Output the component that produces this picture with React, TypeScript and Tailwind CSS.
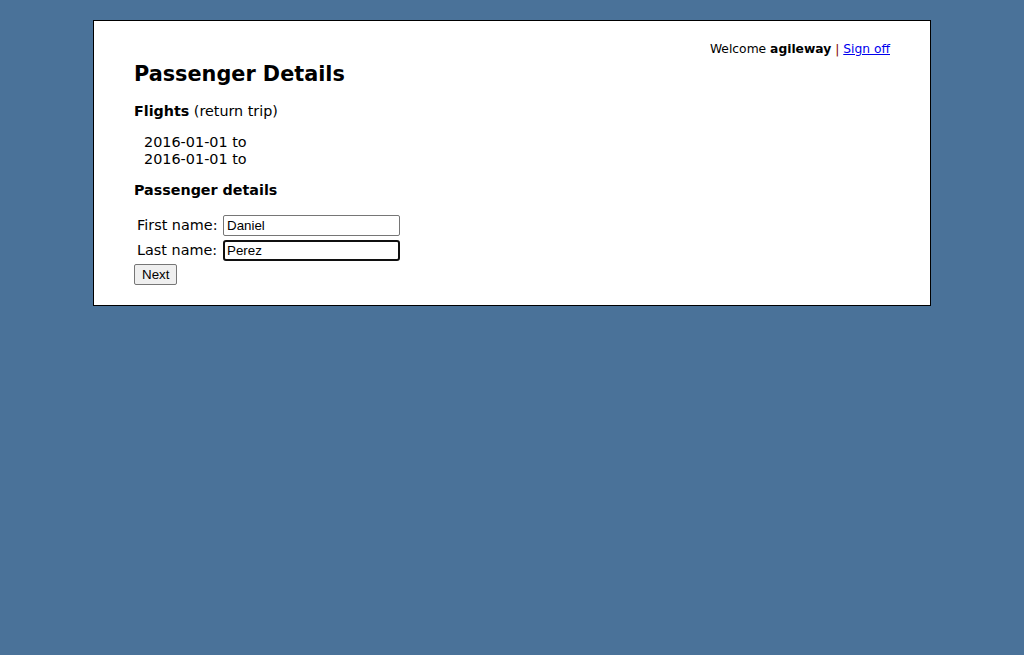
export default function App() {
  return (
    <div className="min-h-[655px] bg-[#4a7299] pt-[20px] font-['DejaVu_Sans',sans-serif] text-black">
      <div className="mx-auto w-[838px] h-[286px] border border-black bg-white px-[40px] pt-[20px]">
        <div className="flex justify-end text-[12.3px] leading-[16px]">
          <span>
            Welcome <b>agileway</b> <span className="text-[#800000]">|</span>{" "}
            <a href="#" className="text-[#0000ee] underline">Sign off</a>
          </span>
        </div>
        <h1 className="mt-[4px] text-[20.8px] font-bold leading-[26px]">Passenger Details</h1>
        <div className="mt-[15px] text-[14.3px] leading-[18px]">
          <b>Flights</b> (return trip)
        </div>
        <div className="mt-[14px] pl-[10px] text-[14.4px] leading-[17px]">
          <div>2016-01-01 to</div>
          <div>2016-01-01 to</div>
        </div>
        <div className="mt-[13px] text-[14.3px] font-bold leading-[18px]">Passenger details</div>
        <table className="mt-[13px] border-separate border-spacing-[2px] text-[14.4px] leading-[19px]">
          <tbody>
            <tr>
              <td className="w-[85px] px-[1px] py-[1px]">First name:</td>
              <td className="px-0 py-[1px]">
                <input
                  defaultValue="Daniel"
                  className="block w-[177px] h-[21px] border border-[#767676] rounded-[2px] px-[3px] text-[13.33px] font-['Liberation_Sans',sans-serif] outline-none"
                />
              </td>
            </tr>
            <tr>
              <td className="w-[85px] px-[1px] py-[1px]">Last name:</td>
              <td className="px-0 py-[1px]">
                <input
                  defaultValue="Perez"
                  className="block w-[177px] h-[21px] border-2 border-[#101010] rounded-[3px] px-[2px] text-[13.33px] font-['Liberation_Sans',sans-serif] outline-none"
                />
              </td>
            </tr>
          </tbody>
        </table>
        <button className="block h-[21px] px-[7px] border border-[#767676] rounded-[2px] bg-[#efefef] text-[13.33px] leading-[16px] font-['Liberation_Sans',sans-serif]">
          Next
        </button>
      </div>
    </div>
  );
}
